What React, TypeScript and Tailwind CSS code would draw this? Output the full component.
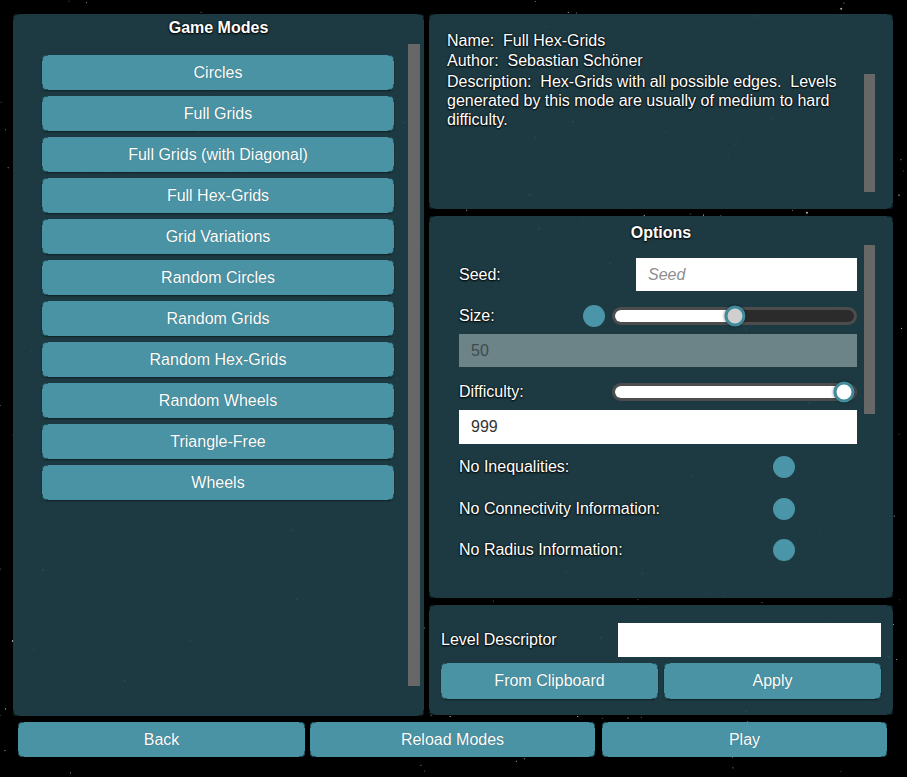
import type { ReactNode } from "react";

// deterministic star field for the backdrop
const stars = (() => {
  let seed = 7;
  const rnd = () => {
    seed = (seed * 16807) % 2147483647;
    return seed / 2147483647;
  };
  return Array.from({ length: 620 }, () => ({
    x: rnd() * 907,
    y: rnd() * 777,
    r: rnd() < 0.85 ? 0.55 : 1,
    o: 0.3 + rnd() * 0.7,
  }));
})();

function Stars() {
  return (
    <svg className="absolute inset-0" width={907} height={777}>
      {stars.map((s, i) => (
        <circle key={i} cx={s.x} cy={s.y} r={s.r} fill="#e3f1f5" opacity={s.o} />
      ))}
    </svg>
  );
}

function Corners({ tone }: { tone: string }) {
  return (
    <>
      <span className={`pointer-events-none absolute left-0 top-0 w-[6px] h-[6px] border-l border-t rounded-tl-[4px] ${tone}`} />
      <span className={`pointer-events-none absolute right-0 top-0 w-[6px] h-[6px] border-r border-t rounded-tr-[4px] ${tone}`} />
      <span className={`pointer-events-none absolute left-0 bottom-0 w-[6px] h-[6px] border-l border-b rounded-bl-[4px] ${tone}`} />
      <span className={`pointer-events-none absolute right-0 bottom-0 w-[6px] h-[6px] border-r border-b rounded-br-[4px] ${tone}`} />
    </>
  );
}

function Panel({ className, children }: { className: string; children: ReactNode }) {
  return (
    <div className={`relative rounded-[4px] bg-[#1f3e46]/[0.94] ${className}`}>
      <Corners tone="border-[#0b1a1e]" />
      {children}
    </div>
  );
}

function Button({ label, className }: { label: string; className: string }) {
  return (
    <button className={`relative flex items-center justify-center rounded-[5px] bg-[#4a93a5] text-[16px] text-white shadow-[0_1px_2px_rgba(0,0,0,0.45)] [text-shadow:0_0_1px_rgba(0,0,0,0.35)] ${className}`}>
      <Corners tone="border-[#23525e]" />
      {label}
    </button>
  );
}

function Scrollbar({ className }: { className: string }) {
  return <div className={`shrink-0 bg-[#676767] ${className}`} />;
}

function Slider({ value, knobWhite }: { value: number; knobWhite?: boolean }) {
  return (
    <div className="relative h-[18px] w-[245px] rounded-full bg-[#4d4d4d] p-[3px]">
      <div className="h-full w-full rounded-full bg-[#2b2b2b]">
        <div className="h-full rounded-l-full bg-white" style={{ width: `${value}%` }} />
      </div>
      <div
        className={`absolute top-1/2 h-[21px] w-[21px] -translate-x-1/2 -translate-y-1/2 rounded-full border-[3px] border-[#3f8a9b] shadow-[0_0_3px_rgba(0,0,0,0.6)] ${knobWhite ? "bg-white" : "bg-[#cfcfcf]"}`}
        style={{ left: `calc(3px + ${value}% - ${value * 0.06}px)` }}
      />
    </div>
  );
}

const label = "text-[16px] text-white [text-shadow:0_0_2px_#000,0_1px_2px_#000]";

export default function App() {
  const modes = [
    "Circles",
    "Full Grids",
    "Full Grids (with Diagonal)",
    "Full Hex-Grids",
    "Grid Variations",
    "Random Circles",
    "Random Grids",
    "Random Hex-Grids",
    "Random Wheels",
    "Triangle-Free",
    "Wheels",
  ];
  const toggles = [
    { name: "No Inequalities:", mt: "mt-[12px]" },
    { name: "No Connectivity Information:", mt: "mt-[20px]" },
    { name: "No Radius Information:", mt: "mt-[19px]" },
  ];

  return (
    <div className="relative h-[777px] w-[907px] overflow-hidden bg-black font-['Liberation_Sans',Arial,sans-serif] text-white">
      <Stars />
      <div className="relative flex flex-col pt-[14px]">
        <div className="flex h-[702px] gap-[5px] pl-[13px]">
          {/* game modes list */}
          <Panel className="h-full w-[411px]">
            <h2 className={`pt-[5px] text-center font-bold leading-[18px] ${label}`}>
              Game Modes
            </h2>
            <div className="flex">
              <ul className="ml-[29px] flex w-[352px] flex-col gap-[6px] pt-[18px]">
                {modes.map((m) => (
                  <li key={m}>
                    <Button label={m} className="h-[35px] w-full" />
                  </li>
                ))}
              </ul>
              <Scrollbar className="ml-[14px] mt-[7px] h-[642px] w-[12px]" />
            </div>
          </Panel>

          <div className="flex w-[464px] flex-col gap-[7px]">
            {/* mode info */}
            <Panel className="h-[195px]">
              <div className="flex">
                <div className={`flex-1 whitespace-pre pl-[18px] pt-[17px] leading-[19px] ${label}`}>
                  <p>Name:  Full Hex-Grids</p>
                  <p className="mt-[1px]">Author:  Sebastian Schöner</p>
                  <p className="mt-[2px]">
                    Description:  Hex-Grids with all possible edges.  Levels{"\n"}generated by this mode are usually of medium to hard{"\n"}difficulty.
                  </p>
                </div>
                <Scrollbar className="mr-[18px] mt-[60px] h-[118px] w-[11px]" />
              </div>
            </Panel>

            {/* options */}
            <Panel className="h-[382px]">
              <h2 className={`pt-[8px] text-center font-bold leading-[18px] ${label}`}>Options</h2>
              <div className="flex">
                <div className="ml-[30px] flex w-[398px] flex-col">
                  <div className="mt-[16px] flex h-[33px] items-center justify-between">
                    <span className={label}>Seed:</span>
                    <div className="flex h-full w-[221px] items-center bg-white px-3 text-[16px] italic text-[#8f8f8f]">
                      Seed
                    </div>
                  </div>
                  <div className="mt-[14px] flex h-[22px] items-center">
                    <span className={`w-[124px] ${label}`}>Size:</span>
                    <span className="h-[22px] w-[22px] rounded-full bg-[#4a95a7]" />
                    <div className="ml-[7px]">
                      <Slider value={50} />
                    </div>
                  </div>
                  <div className="mt-[7px] flex h-[33px] items-center bg-[#6c8388] px-3 text-[16px] text-[#3e4a4d]">
                    50
                  </div>
                  <div className="mt-[14px] flex h-[22px] items-center">
                    <span className={`w-[153px] ${label}`}>Difficulty:</span>
                    <Slider value={96} knobWhite />
                  </div>
                  <div className="mt-[7px] flex h-[34px] items-center bg-white px-3 text-[16px] text-[#333]">
                    999
                  </div>
                  {toggles.map((t) => (
                    <div key={t.name} className={`flex h-[22px] items-center ${t.mt}`}>
                      <span className={`w-[314px] ${label}`}>{t.name}</span>
                      <span className="h-[22px] w-[22px] rounded-full bg-[#4a95a7]" />
                    </div>
                  ))}
                </div>
                <Scrollbar className="ml-[7px] mt-[3px] h-[169px] w-[11px]" />
              </div>
            </Panel>

            {/* level descriptor */}
            <Panel className="h-[110px] px-[12px] pt-[18px]">
              <div className="flex h-[34px] items-center justify-between">
                <span className={label}>Level Descriptor</span>
                <div className="h-full w-[263px] bg-white" />
              </div>
              <div className="mt-[6px] flex gap-[6px]">
                <Button label="From Clipboard" className="h-[36px] w-[217px]" />
                <Button label="Apply" className="h-[36px] w-[217px]" />
              </div>
            </Panel>
          </div>
        </div>

        <div className="mt-[6px] flex pl-[18px]">
          <Button label="Back" className="h-[35px] w-[287px]" />
          <Button label="Reload Modes" className="ml-[5px] h-[35px] w-[285px]" />
          <Button label="Play" className="ml-[7px] h-[35px] w-[285px]" />
        </div>
      </div>
    </div>
  );
}
